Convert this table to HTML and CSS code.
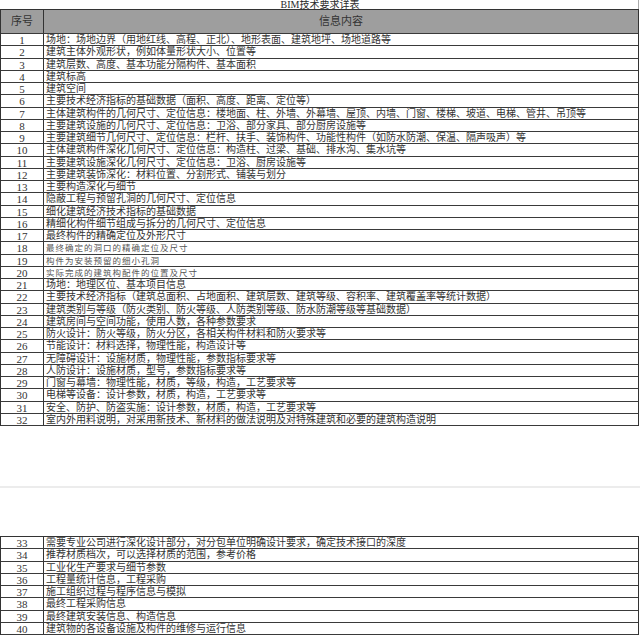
FILE: index.html
```html
<!DOCTYPE html>
<html lang="zh-CN">
<head>
<meta charset="utf-8">
<title>BIM技术要求详表</title>
<link rel="stylesheet" href="styles.css">
</head>
<body>
<div class="sheet">
  <div class="title">BIM技术要求详表</div>
  <div class="table">
    <div class="row head"><div class="num">序号</div><div class="txt">信息内容</div></div>
    <div class="row"><div class="num">1</div><div class="txt">场地：场地边界（用地红线、高程、正北）、地形表面、建筑地坪、场地道路等</div></div>
    <div class="row"><div class="num">2</div><div class="txt">建筑主体外观形状，例如体量形状大小、位置等</div></div>
    <div class="row"><div class="num">3</div><div class="txt">建筑层数、高度、基本功能分隔构件、基本面积</div></div>
    <div class="row"><div class="num">4</div><div class="txt">建筑标高</div></div>
    <div class="row"><div class="num">5</div><div class="txt">建筑空间</div></div>
    <div class="row"><div class="num">6</div><div class="txt">主要技术经济指标的基础数据（面积、高度、距离、定位等）</div></div>
    <div class="row"><div class="num">7</div><div class="txt">主体建筑构件的几何尺寸、定位信息：楼地面、柱、外墙、外幕墙、屋顶、内墙、门窗、楼梯、坡道、电梯、管井、吊顶等</div></div>
    <div class="row"><div class="num">8</div><div class="txt">主要建筑设施的几何尺寸、定位信息：卫浴、部分家具、部分厨房设施等</div></div>
    <div class="row"><div class="num">9</div><div class="txt">主要建筑细节几何尺寸、定位信息：栏杆、扶手、装饰构件、功能性构件（如防水防潮、保温、隔声吸声）等</div></div>
    <div class="row"><div class="num">10</div><div class="txt">主体建筑构件深化几何尺寸、定位信息：构造柱、过梁、基础、排水沟、集水坑等</div></div>
    <div class="row"><div class="num">11</div><div class="txt">主要建筑设施深化几何尺寸、定位信息：卫浴、厨房设施等</div></div>
    <div class="row"><div class="num">12</div><div class="txt">主要建筑装饰深化：材料位置、分割形式、铺装与划分</div></div>
    <div class="row"><div class="num">13</div><div class="txt">主要构造深化与细节</div></div>
    <div class="row"><div class="num">14</div><div class="txt">隐蔽工程与预留孔洞的几何尺寸、定位信息</div></div>
    <div class="row"><div class="num">15</div><div class="txt">细化建筑经济技术指标的基础数据</div></div>
    <div class="row"><div class="num">16</div><div class="txt">精细化构件细节组成与拆分的几何尺寸、定位信息</div></div>
    <div class="row"><div class="num">17</div><div class="txt">最终构件的精确定位及外形尺寸</div></div>
    <div class="row"><div class="num">18</div><div class="txt thin">最终确定的洞口的精确定位及尺寸</div></div>
    <div class="row"><div class="num">19</div><div class="txt thin">构件为安装预留的细小孔洞</div></div>
    <div class="row"><div class="num">20</div><div class="txt thin">实际完成的建筑构配件的位置及尺寸</div></div>
    <div class="row"><div class="num">21</div><div class="txt">场地：地理区位、基本项目信息</div></div>
    <div class="row"><div class="num">22</div><div class="txt">主要技术经济指标（建筑总面积、占地面积、建筑层数、建筑等级、容积率、建筑覆盖率等统计数据）</div></div>
    <div class="row"><div class="num">23</div><div class="txt">建筑类别与等级（防火类别、防火等级、人防类别等级、防水防潮等级等基础数据）</div></div>
    <div class="row"><div class="num">24</div><div class="txt">建筑房间与空间功能，使用人数，各种参数要求</div></div>
    <div class="row"><div class="num">25</div><div class="txt">防火设计：防火等级，防火分区，各相关构件材料和防火要求等</div></div>
    <div class="row"><div class="num">26</div><div class="txt">节能设计：材料选择，物理性能，构造设计等</div></div>
    <div class="row"><div class="num">27</div><div class="txt">无障碍设计：设施材质，物理性能，参数指标要求等</div></div>
    <div class="row"><div class="num">28</div><div class="txt">人防设计：设施材质，型号，参数指标要求等</div></div>
    <div class="row"><div class="num">29</div><div class="txt">门窗与幕墙：物理性能，材质，等级，构造，工艺要求等</div></div>
    <div class="row"><div class="num">30</div><div class="txt">电梯等设备：设计参数，材质，构造，工艺要求等</div></div>
    <div class="row"><div class="num">31</div><div class="txt">安全、防护、防盗实施：设计参数，材质，构造，工艺要求等</div></div>
    <div class="row"><div class="num">32</div><div class="txt">室内外用料说明，对采用新技术、新材料的做法说明及对特殊建筑和必要的建筑构造说明</div></div>
  </div>
  <div class="gap"><div class="pagebreak"></div></div>
  <div class="table cont">
    <div class="row"><div class="num">33</div><div class="txt">需要专业公司进行深化设计部分，对分包单位明确设计要求，确定技术接口的深度</div></div>
    <div class="row"><div class="num">34</div><div class="txt">推荐材质档次，可以选择材质的范围，参考价格</div></div>
    <div class="row"><div class="num">35</div><div class="txt">工业化生产要求与细节参数</div></div>
    <div class="row"><div class="num">36</div><div class="txt">工程量统计信息，工程采购</div></div>
    <div class="row"><div class="num">37</div><div class="txt">施工组织过程与程序信息与模拟</div></div>
    <div class="row"><div class="num">38</div><div class="txt">最终工程采购信息</div></div>
    <div class="row"><div class="num">39</div><div class="txt">最终建筑安装信息、构造信息</div></div>
    <div class="row"><div class="num">40</div><div class="txt">建筑物的各设备设施及构件的维修与运行信息</div></div>
  </div>
</div>
</body>
</html>
```
FILE: styles.css
```css
html, body {
  margin: 0;
  padding: 0;
  background: #fff;
}
.sheet {
  width: 639px;
  font-family: "Liberation Serif", "Noto Sans CJK SC", serif;
  color: #333;
}
.title {
  height: 9px;
  box-sizing: border-box;
  border-right: 1px solid #aaa;
  text-align: center;
  font-size: 10px;
  line-height: 9px;
  overflow: hidden;
  padding-left: 2px;
  color: #2a2a2a;
}
.table {
  border-top: 1px solid #333;
  border-left: 1px solid #333;
  border-right: 1px solid #333;
}
.row {
  display: flex;
  box-sizing: border-box;
  height: 12.25px;
  border-bottom: 1px solid #3a3a3a;
}
.num {
  width: 43px;
  flex: none;
  box-sizing: border-box;
  border-right: 1px solid #333;
  text-align: center;
  font-family: "Liberation Serif", serif;
  font-size: 11px;
  line-height: 12px;
}
.txt {
  flex: 1;
  padding-left: 2px;
  font-size: 10px;
  line-height: 12px;
  white-space: nowrap;
  overflow: hidden;
}
.txt.thin {
  font-size: 8.5px;
  letter-spacing: 1px;
  color: #555;
}
.row.head {
  height: 24px;
  background: #9e9e9e;
}
.row.head .num,
.row.head .txt {
  font-size: 11px;
  line-height: 23px;
  text-align: center;
}
.row.head .txt {
  padding-left: 0;
}
.gap {
  height: 110px;
  display: flex;
  flex-direction: column;
}
.pagebreak {
  margin-top: 60px;
  height: 2px;
  background: #ececec;
  width: 640px;
}
```
